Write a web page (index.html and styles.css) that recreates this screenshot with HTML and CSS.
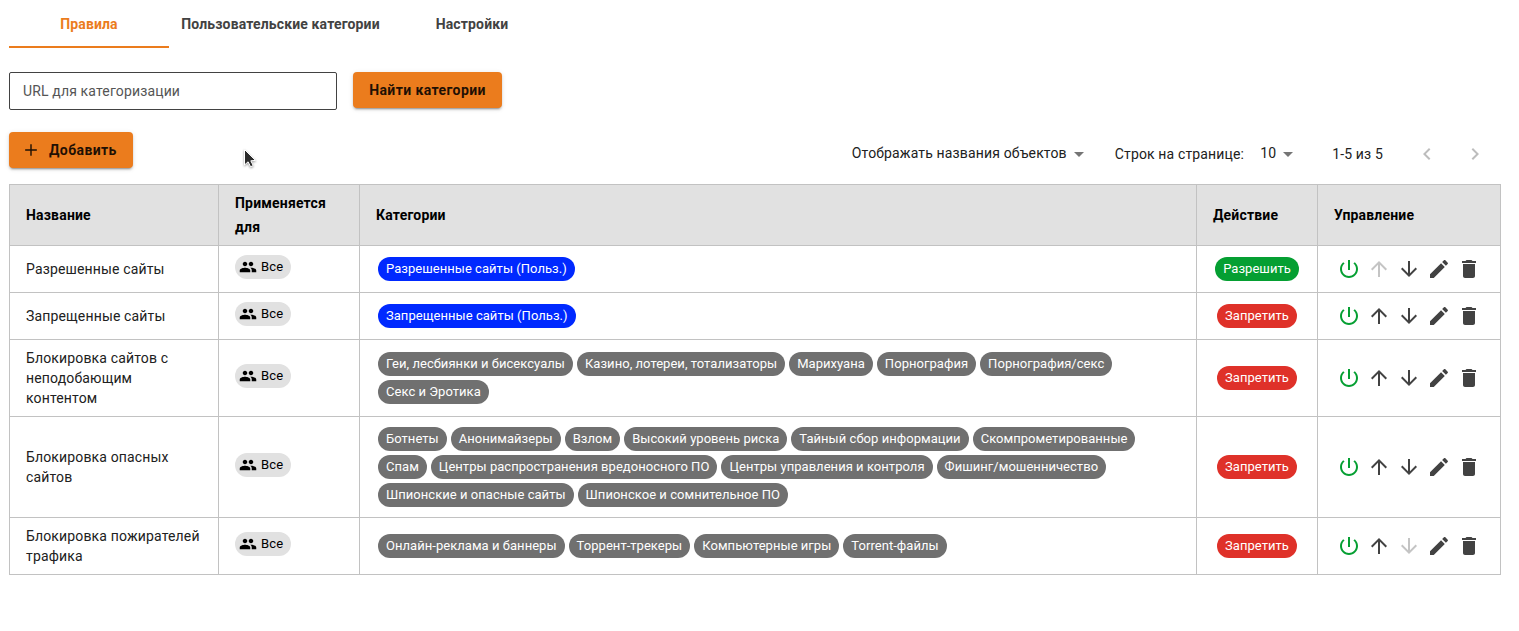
FILE: index.html
```
<!DOCTYPE html>
<html lang="ru">
<head>
<meta charset="utf-8">
<title>Правила</title>
<link rel="stylesheet" href="styles.css">
</head>
<body>
<svg class="sprite" aria-hidden="true">
  <symbol id="power" viewBox="0 0 24 24"><path d="M13 3h-2v10h2V3zm4.83 2.17l-1.42 1.42C17.99 7.86 19 9.81 19 12c0 3.87-3.13 7-7 7s-7-3.13-7-7c0-2.19 1.01-4.14 2.58-5.42L6.17 5.17C4.23 6.82 3 9.26 3 12c0 4.97 4.03 9 9 9s9-4.03 9-9c0-2.74-1.23-5.18-3.17-6.83z"/></symbol>
  <symbol id="up" viewBox="0 0 24 24"><path d="M4 12l1.41 1.41L11 7.83V20h2V7.83l5.58 5.59L20 12l-8-8-8 8z"/></symbol>
  <symbol id="down" viewBox="0 0 24 24"><path d="M20 12l-1.41-1.41L13 16.17V4h-2v12.17l-5.58-5.59L4 12l8 8 8-8z"/></symbol>
  <symbol id="edit" viewBox="0 0 24 24"><path d="M3 17.25V21h3.75L17.81 9.94l-3.75-3.75L3 17.25zM20.71 7.04c.39-.39.39-1.02 0-1.41l-2.34-2.34c-.39-.39-1.02-.39-1.41 0l-1.83 1.83 3.75 3.75 1.83-1.83z"/></symbol>
  <symbol id="trash" viewBox="0 0 24 24"><path d="M6 19c0 1.1.9 2 2 2h8c1.1 0 2-.9 2-2V7H6v12zM19 4h-3.500l-1-1h-5l-1 1H5v2h14V4z"/></symbol>
  <symbol id="people" viewBox="0 0 24 24"><path d="M16 11c1.66 0 2.99-1.340 2.99-3S17.660 5 16 5c-1.660 0-3 1.340-3 3s1.340 3 3 3zm-8 0c1.660 0 2.990-1.340 2.990-3S9.660 5 8 5C6.340 5 5 6.340 5 8s1.340 3 3 3zm0 2c-2.330 0-7 1.170-7 3.500V19h14v-2.500c0-2.330-4.670-3.500-7-3.500zm8 0c-.290 0-.620.020-.970.050 1.160.840 1.970 1.970 1.970 3.450V19h6v-2.500c0-2.330-4.670-3.500-7-3.500z"/></symbol>
  <symbol id="plus" viewBox="0 0 24 24"><path d="M19 12.850h-6.150V19h-1.700v-6.150H5v-1.700h6.150V5h1.700v6.150H19z"/></symbol>
  <symbol id="left" viewBox="0 0 24 24"><path d="M15.410 7.410L14 6l-6 6 6 6 1.410-1.410L10.830 12z"/></symbol>
  <symbol id="right" viewBox="0 0 24 24"><path d="M10 6L8.590 7.410 13.170 12l-4.580 4.590L10 18l6-6z"/></symbol>
</svg>

<nav class="tabs">
  <a class="tab tab-active">Правила</a>
  <a class="tab tab-wide">Пользовательские категории</a>
  <a class="tab">Настройки</a>
</nav>

<div class="search">
  <div class="field">URL для категоризации</div>
  <button class="btn find">Найти категории</button>
</div>

<div class="toolbar">
  <button class="btn add"><svg class="plus"><use href="#plus"/></svg>Добавить</button>
  <div class="pager">
    <span class="select names">Отображать названия объектов<i class="caret"></i></span>
    <span class="label">Строк на странице:</span>
    <span class="select count">10<i class="caret"></i></span>
    <span class="range">1-5 из 5</span>
    <svg class="icon page-nav"><use href="#left"/></svg>
    <svg class="icon page-nav"><use href="#right"/></svg>
  </div>
</div>

<svg class="cursor" viewBox="0 0 16 22"><path d="M2.500 1.500V17l3.600-3.200 2.500 5 2.600-1.300-2.400-4.700 4.700-.400z"/></svg>

<table class="rules">
  <colgroup><col class="c-name"><col class="c-for"><col class="c-cat"><col class="c-act"><col class="c-ctl"></colgroup>
  <thead>
    <tr><th>Название</th><th>Применяется для</th><th>Категории</th><th>Действие</th><th>Управление</th></tr>
  </thead>
  <tbody>
    <tr class="h47">
      <td>Разрешенные сайты</td>
      <td><span class="who"><svg><use href="#people"/></svg>Все</span></td>
      <td><div class="tags"><span class="tag blue">Разрешенные сайты (Польз.)</span></div></td>
      <td><div class="act"><span class="tag green">Разрешить</span></div></td>
      <td><div class="controls"><svg class="icon on"><use href="#power"/></svg><svg class="icon off"><use href="#up"/></svg><svg class="icon"><use href="#down"/></svg><svg class="icon"><use href="#edit"/></svg><svg class="icon"><use href="#trash"/></svg></div></td>
    </tr>
    <tr class="h47">
      <td>Запрещенные сайты</td>
      <td><span class="who"><svg><use href="#people"/></svg>Все</span></td>
      <td><div class="tags"><span class="tag blue">Запрещенные сайты (Польз.)</span></div></td>
      <td><div class="act"><span class="tag red">Запретить</span></div></td>
      <td><div class="controls"><svg class="icon on"><use href="#power"/></svg><svg class="icon"><use href="#up"/></svg><svg class="icon"><use href="#down"/></svg><svg class="icon"><use href="#edit"/></svg><svg class="icon"><use href="#trash"/></svg></div></td>
    </tr>
    <tr class="h77">
      <td>Блокировка сайтов с неподобающим контентом</td>
      <td><span class="who"><svg><use href="#people"/></svg>Все</span></td>
      <td><div class="tags"><span class="tag">Геи, лесбиянки и бисексуалы</span><span class="tag">Казино, лотереи, тотализаторы</span><span class="tag">Марихуана</span><span class="tag">Порнография</span><span class="tag">Порнография/секс</span><span class="tag">Секс и Эротика</span></div></td>
      <td><div class="act"><span class="tag red">Запретить</span></div></td>
      <td><div class="controls"><svg class="icon on"><use href="#power"/></svg><svg class="icon"><use href="#up"/></svg><svg class="icon"><use href="#down"/></svg><svg class="icon"><use href="#edit"/></svg><svg class="icon"><use href="#trash"/></svg></div></td>
    </tr>
    <tr class="h101">
      <td>Блокировка опасных сайтов</td>
      <td><span class="who"><svg><use href="#people"/></svg>Все</span></td>
      <td><div class="tags"><span class="tag">Ботнеты</span><span class="tag">Анонимайзеры</span><span class="tag">Взлом</span><span class="tag">Высокий уровень риска</span><span class="tag">Тайный сбор информации</span><span class="tag">Скомпрометированные</span><span class="tag">Спам</span><span class="tag">Центры распространения вредоносного ПО</span><span class="tag">Центры управления и контроля</span><span class="tag">Фишинг/мошенничество</span><span class="tag">Шпионские и опасные сайты</span><span class="tag">Шпионское и сомнительное ПО</span></div></td>
      <td><div class="act"><span class="tag red">Запретить</span></div></td>
      <td><div class="controls"><svg class="icon on"><use href="#power"/></svg><svg class="icon"><use href="#up"/></svg><svg class="icon"><use href="#down"/></svg><svg class="icon"><use href="#edit"/></svg><svg class="icon"><use href="#trash"/></svg></div></td>
    </tr>
    <tr class="h57">
      <td>Блокировка пожирателей трафика</td>
      <td><span class="who"><svg><use href="#people"/></svg>Все</span></td>
      <td><div class="tags"><span class="tag">Онлайн-реклама и баннеры</span><span class="tag">Торрент-трекеры</span><span class="tag">Компьютерные игры</span><span class="tag">Torrent-файлы</span></div></td>
      <td><div class="act"><span class="tag red">Запретить</span></div></td>
      <td><div class="controls"><svg class="icon on"><use href="#power"/></svg><svg class="icon"><use href="#up"/></svg><svg class="icon off"><use href="#down"/></svg><svg class="icon"><use href="#edit"/></svg><svg class="icon"><use href="#trash"/></svg></div></td>
    </tr>
  </tbody>
</table>
</body>
</html>
```
FILE: styles.css
```
* { box-sizing: border-box; }
body {
  margin: 0;
  padding: 0 18px 0 9px;
  background: #fff;
  color: #212121;
  font: 14px/20px Roboto, sans-serif;
  letter-spacing: 0.15px;
}
.sprite { display: none; }
svg { fill: currentColor; flex: none; display: block; }

.tabs { display: flex; height: 48px; }
.tab {
  width: 160px;
  height: 48px;
  text-align: center;
  line-height: 48px;
  font-weight: 700;
  letter-spacing: 0.14px;
  color: #424242;
}
.tab-wide { width: 223px; }
.tab-active { color: #eb7c1d; border-bottom: 2px solid #eb7c1d; }

.search { display: flex; gap: 16px; margin-top: 24px; height: 38px; }
.field {
  width: 328px;
  height: 38px;
  padding: 0 13px;
  border: 1px solid #424242;
  border-radius: 2px;
  line-height: 36px;
  color: #555;
}
.btn {
  height: 36px;
  border: 0;
  border-radius: 4px;
  background: #eb7c1d;
  color: #1f1004;
  font: 700 14px/36px Roboto, sans-serif;
  letter-spacing: 0.4px;
  padding: 0;
  box-shadow: 0 3px 1px -2px rgba(0,0,0,.2), 0 2px 2px rgba(0,0,0,.14), 0 1px 5px rgba(0,0,0,.12);
}
.find { width: 149px; }

.toolbar { display: flex; justify-content: space-between; margin-top: 22px; height: 52px; }
.add { width: 124px; display: flex; align-items: center; padding-left: 12px; }
.plus { width: 20px; height: 20px; margin-right: 8px; }
.pager { display: flex; align-items: center; height: 44px; padding-right: 14px; }
.select { display: flex; align-items: center; margin-bottom: 2px; }
.names { margin-right: 31px; }
.label { margin-right: 16px; }
.caret { border: 5px solid transparent; border-top-color: #757575; border-bottom: 0; margin-left: 7px; margin-top: 3px; }
.range { margin: 0 32px 0 39px; }
.page-nav { color: #bdbdbd; }
.page-nav + .page-nav { margin-left: 24px; }
.icon { width: 24px; height: 24px; }

.cursor {
  position: absolute;
  left: 242px;
  top: 148px;
  width: 16px;
  height: 22px;
  fill: #2b2b2b;
  stroke: #fff;
  stroke-width: 1;
  filter: drop-shadow(0 1px 1px rgba(0,0,0,.4));
}

.rules {
  width: 1492px;
  table-layout: fixed;
  border-collapse: separate;
  border-spacing: 0;
  border-right: 1px solid #c2c2c2;
  border-bottom: 1px solid #c2c2c2;
}
.c-name { width: 209px; }
.c-for { width: 141px; }
.c-cat { width: 837px; }
.c-act { width: 121px; }
.c-ctl { width: 183px; }
th, td {
  border-left: 1px solid #c2c2c2;
  border-top: 1px solid #c2c2c2;
  padding: 0 16px;
  text-align: left;
  vertical-align: middle;
}
th {
  height: 61px;
  background: #e1e1e1;
  color: #000;
  font-weight: 700;
  line-height: 24px;
  letter-spacing: 0.18px;
}
.h47 { height: 47px; }
.h77 { height: 77px; }
.h101 { height: 101px; }
.h57 { height: 57px; }

.who {
  display: flex;
  align-items: center;
  width: 56px;
  height: 24px;
  margin-bottom: 4px;
  padding-left: 4px;
  border-radius: 12px;
  background: #e1e1e1;
  color: #000;
  font-size: 13px;
}
.who svg { width: 18px; height: 18px; margin-right: 4px; }
.tags { display: flex; flex-wrap: wrap; gap: 4px; padding-left: 2px; }
.tag {
  height: 24px;
  padding: 0 8px;
  border-radius: 12px;
  background: #707070;
  color: #fff;
  font-size: 13px;
  line-height: 24px;
  letter-spacing: 0.04px;
  white-space: nowrap;
}
.blue { background: #0029ff; }
.green { background: #059f32; }
.red { background: #df3129; }
.act { display: flex; justify-content: center; }
.controls { display: flex; gap: 6px; padding-left: 3px; color: #424242; }
.on { color: #059f32; }
.off { color: #c4c4c4; }
```
